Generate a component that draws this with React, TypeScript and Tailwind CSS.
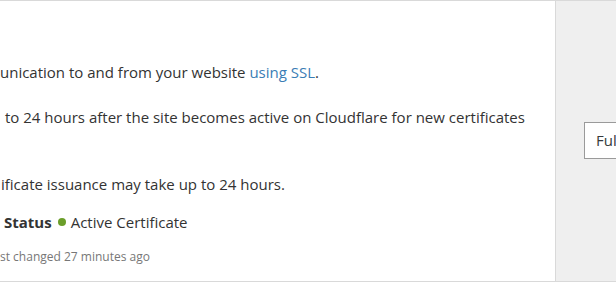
export default function App() {
  return (
    <main className="h-[282px] w-[616px] overflow-hidden bg-white font-['Open_Sans',sans-serif] text-[#333333]">
      <div className="flex h-full border-y border-[#d9d9d9]">
        <section className="flex-1 border-r border-[#d9d9d9] bg-white">
          <div className="flex flex-col text-[15px] leading-5">
            <p className="mt-[61px] whitespace-nowrap">
              unication to and from your website{" "}
              <a href="#" className="text-[#3a7db5]">
                using SSL
              </a>
              .
            </p>
            <p className="mt-[25px] whitespace-nowrap pl-[5px]">
              to 24 hours after the site becomes active on Cloudflare for new certificates
            </p>
            <p className="mt-[47px] whitespace-nowrap pl-[1px]">
              ificate issuance may take up to 24 hours.
            </p>
            <div className="mt-[18px] flex items-center whitespace-nowrap pl-[4px]">
              <span className="font-bold">Status</span>
              <span className="ml-[6px] mr-[5px] inline-block h-[8px] w-[8px] rounded-full bg-[#6b9e2a]" />
              <span>Active Certificate</span>
            </div>
            <p className="mt-[15px] whitespace-nowrap text-[12px] text-[#777777]">
              st changed 27 minutes ago
            </p>
          </div>
        </section>
        <aside className="w-[60px] overflow-hidden bg-[#efefef]">
          <div className="ml-[28px] mt-[121px] flex h-[37px] w-[120px] items-center border border-[#9a9a9a] bg-white pl-[11px] text-[15px] text-[#36393a]">
            Full
          </div>
        </aside>
      </div>
    </main>
  );
}
